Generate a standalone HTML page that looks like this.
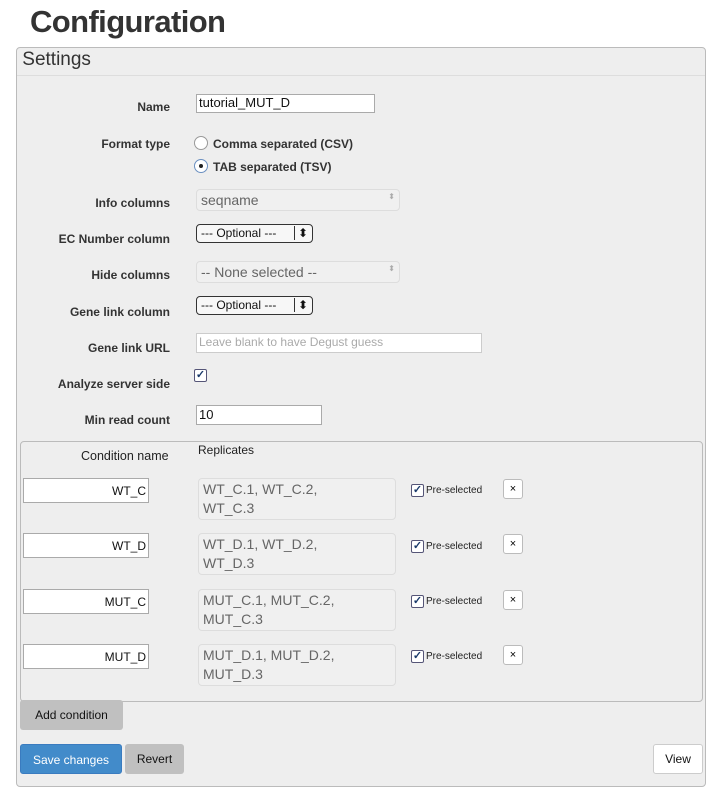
<!DOCTYPE html>
<html><head><style>
body{margin:0;width:714px;height:788px;background:#fff;font-family:"Liberation Sans",Arial,sans-serif;position:relative;overflow:hidden}
.a{position:absolute}
h1{position:absolute;left:30px;top:4px;margin:0;font-size:31px;font-weight:bold;color:#333;letter-spacing:-0.6px}
.panel{left:16px;top:47px;width:688px;height:738px;background:#eee;border:1px solid #bbb;border-radius:4px}
.hdr{left:17px;top:49px;width:688px;height:26px;border-bottom:1px solid #ddd;font-size:19px;color:#333}
.lab{position:absolute;width:170px;left:0;text-align:right;font-size:12px;font-weight:bold;color:#333}
.inp{background:#fff;border:1px solid #aaa;font-size:13px;color:#111;box-sizing:border-box;padding:1px 2px}
.sel{background:#f0f0f0;border:1px solid #ddd;border-radius:4px;box-sizing:border-box;color:#666;font-size:14px;padding:2px 4px}
.opt{background:#f7f7f7;border:1px solid #333;border-radius:4px;box-sizing:border-box;font-size:12px;padding:1px 4px;color:#111}
.btn{font-size:12px;text-align:center;box-sizing:border-box;border-radius:3px}
.cb{width:11px;height:11px;border:1px solid #557;background:#fff;border-radius:2px;font-size:11px;line-height:10px;text-align:center;color:#1a3a6a;font-weight:bold}
</style></head><body>
<h1>Configuration</h1>
<div class="a panel"></div>
<div class="a hdr">&nbsp;Settings</div>

<div class="lab" style="top:100px">Name</div>
<div class="a inp" style="left:196px;top:94px;width:179px;height:19px;padding-top:0">tutorial_MUT_D</div>

<div class="lab" style="top:137px">Format type</div>
<div class="a" style="left:194px;top:136px;width:12px;height:12px;border:1px solid #999;border-radius:50%;background:#fff"></div>
<div class="a" style="left:213px;top:137px;font-size:12px;font-weight:bold;color:#333">Comma separated (CSV)</div>
<div class="a" style="left:194px;top:159px;width:12px;height:12px;border:1px solid #6a8fc0;border-radius:50%;background:#fff"></div>
<div class="a" style="left:199px;top:164px;width:4px;height:4px;border-radius:50%;background:#222"></div>
<div class="a" style="left:213px;top:160px;font-size:12px;font-weight:bold;color:#333">TAB separated (TSV)</div>

<div class="lab" style="top:196px">Info columns</div>
<div class="a sel" style="left:196px;top:189px;width:204px;height:22px">seqname<span style="float:right;font-size:8px;color:#aaa">⬍</span></div>

<div class="lab" style="top:232px">EC Number column</div>
<div class="a opt" style="left:196px;top:224px;width:117px;height:19px">--- Optional --- <span style="float:right;border-left:1px solid #333;padding-left:3px">⬍</span></div>

<div class="lab" style="top:268px">Hide columns</div>
<div class="a sel" style="left:196px;top:261px;width:204px;height:22px">-- None selected --<span style="float:right;font-size:8px;color:#aaa">⬍</span></div>

<div class="lab" style="top:305px">Gene link column</div>
<div class="a opt" style="left:196px;top:296px;width:117px;height:19px">--- Optional --- <span style="float:right;border-left:1px solid #333;padding-left:3px">⬍</span></div>

<div class="lab" style="top:341px">Gene link URL</div>
<div class="a inp" style="left:196px;top:333px;width:286px;height:20px;border-color:#ccc;color:#aaa;font-size:12px">Leave blank to have Degust guess</div>

<div class="lab" style="top:377px">Analyze server side</div>
<div class="a cb" style="left:194px;top:369px">✓</div>

<div class="lab" style="top:413px">Min read count</div>
<div class="a inp" style="left:196px;top:405px;width:126px;height:20px">10</div>

<div class="a" style="left:20px;top:441px;width:681px;height:259px;border:1px solid #bbb;border-radius:4px"></div>
<div class="a" style="left:81px;top:449px;font-size:12.5px;color:#222">Condition name</div>
<div class="a" style="left:198px;top:443px;font-size:12px;color:#222">Replicates</div>

<div class="a inp" style="left:23px;top:478px;width:126px;height:25px;text-align:right;padding:5px 2px;font-size:12px">WT_C</div>
<div class="a sel" style="left:198px;top:478px;width:198px;height:42px;line-height:19px;padding:1px 4px">WT_C.1, WT_C.2,<br>WT_C.3</div>
<div class="a cb" style="left:411px;top:484px">✓</div><div class="a" style="left:426px;top:485px;font-size:10px;color:#222">Pre-selected</div>
<div class="a btn" style="left:503px;top:479px;width:20px;height:20px;background:#fff;border:1px solid #bbb;font-size:11px;line-height:18px">×</div>

<div class="a inp" style="left:23px;top:533px;width:126px;height:25px;text-align:right;padding:5px 2px;font-size:12px">WT_D</div>
<div class="a sel" style="left:198px;top:533px;width:198px;height:42px;line-height:19px;padding:1px 4px">WT_D.1, WT_D.2,<br>WT_D.3</div>
<div class="a cb" style="left:411px;top:540px">✓</div><div class="a" style="left:426px;top:541px;font-size:10px;color:#222">Pre-selected</div>
<div class="a btn" style="left:503px;top:534px;width:20px;height:20px;background:#fff;border:1px solid #bbb;font-size:11px;line-height:18px">×</div>

<div class="a inp" style="left:23px;top:589px;width:126px;height:25px;text-align:right;padding:5px 2px;font-size:12px">MUT_C</div>
<div class="a sel" style="left:198px;top:589px;width:198px;height:42px;line-height:19px;padding:1px 4px">MUT_C.1, MUT_C.2,<br>MUT_C.3</div>
<div class="a cb" style="left:411px;top:595px">✓</div><div class="a" style="left:426px;top:596px;font-size:10px;color:#222">Pre-selected</div>
<div class="a btn" style="left:503px;top:590px;width:20px;height:20px;background:#fff;border:1px solid #bbb;font-size:11px;line-height:18px">×</div>

<div class="a inp" style="left:23px;top:644px;width:126px;height:25px;text-align:right;padding:5px 2px;font-size:12px">MUT_D</div>
<div class="a sel" style="left:198px;top:644px;width:198px;height:42px;line-height:19px;padding:1px 4px">MUT_D.1, MUT_D.2,<br>MUT_D.3</div>
<div class="a cb" style="left:411px;top:650px">✓</div><div class="a" style="left:426px;top:651px;font-size:10px;color:#222">Pre-selected</div>
<div class="a btn" style="left:503px;top:645px;width:20px;height:20px;background:#fff;border:1px solid #bbb;font-size:11px;line-height:18px">×</div>

<div class="a btn" style="left:20px;top:700px;width:103px;height:30px;background:#c0c0c0;line-height:30px;color:#111">Add condition</div>
<div class="a btn" style="left:20px;top:744px;width:102px;height:30px;background:#428bca;line-height:30px;color:#fff;border:1px solid #3a7bbf">Save changes</div>
<div class="a btn" style="left:125px;top:744px;width:59px;height:30px;background:#c0c0c0;line-height:30px;color:#111">Revert</div>
<div class="a btn" style="left:653px;top:744px;width:50px;height:30px;background:#fff;border:1px solid #ccc;line-height:28px;color:#111">View</div>
</body></html>
